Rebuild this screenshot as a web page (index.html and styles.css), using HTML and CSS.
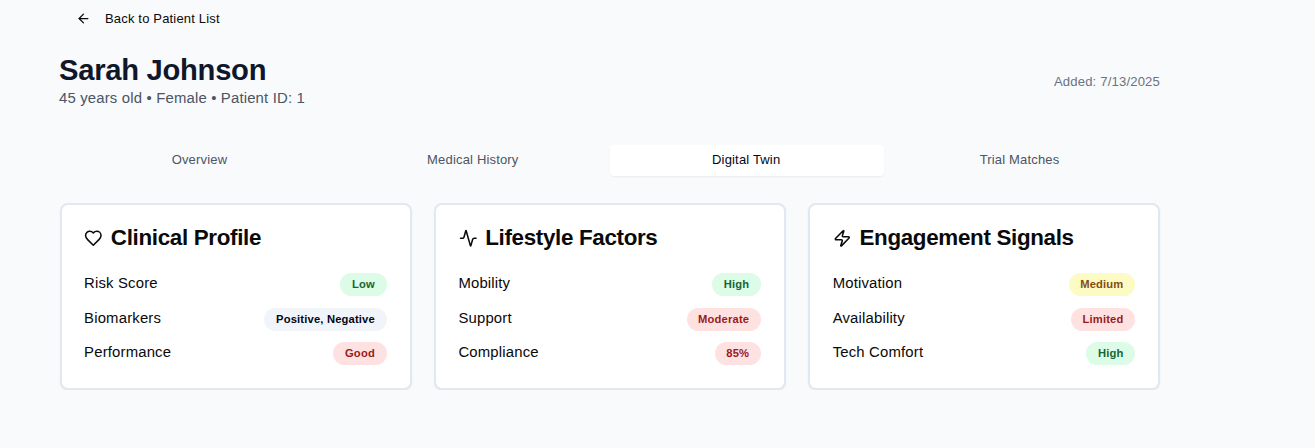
FILE: index.html
```html
<!DOCTYPE html>
<html lang="en">
<head>
<meta charset="utf-8">
<title>Sarah Johnson</title>
<link rel="stylesheet" href="styles.css">
</head>
<body>
<main class="page">
  <a class="back">
    <svg class="icon back-icon" viewBox="0 0 24 24"><path d="m12 19-7-7 7-7"/><path d="M19 12H5"/></svg>
    <span>Back to Patient List</span>
  </a>
  <header class="header">
    <div>
      <h1 class="name">Sarah Johnson</h1>
      <p class="meta">45 years old • Female • Patient ID: 1</p>
    </div>
    <div class="added">Added: 7/13/2025</div>
  </header>
  <nav class="tabs">
    <div class="tab">Overview</div>
    <div class="tab">Medical History</div>
    <div class="tab tab-active">Digital Twin</div>
    <div class="tab">Trial Matches</div>
  </nav>
  <div class="cards">
    <section class="card">
      <h2 class="card-title">
        <svg class="icon" viewBox="0 0 24 24"><path d="M19 14c1.49-1.46 3-3.21 3-5.5A5.5 5.5 0 0 0 16.5 3c-1.76 0-3 .5-4.5 2-1.5-1.5-2.74-2-4.5-2A5.5 5.5 0 0 0 2 8.5c0 2.3 1.5 4.05 3 5.5l7 7Z"/></svg>
        <span>Clinical Profile</span>
      </h2>
      <div class="rows">
        <div class="row"><span>Risk Score</span><span class="badge green">Low</span></div>
        <div class="row"><span>Biomarkers</span><span class="badge slate">Positive, Negative</span></div>
        <div class="row"><span>Performance</span><span class="badge red">Good</span></div>
      </div>
    </section>
    <section class="card">
      <h2 class="card-title">
        <svg class="icon" viewBox="0 0 24 24"><path d="M22 12h-2.48a2 2 0 0 0-1.93 1.46l-2.35 8.36a.25.25 0 0 1-.48 0L9.24 2.18a.25.25 0 0 0-.48 0l-2.35 8.36A2 2 0 0 1 4.49 12H2"/></svg>
        <span>Lifestyle Factors</span>
      </h2>
      <div class="rows">
        <div class="row"><span>Mobility</span><span class="badge green">High</span></div>
        <div class="row"><span>Support</span><span class="badge red">Moderate</span></div>
        <div class="row"><span>Compliance</span><span class="badge red">85%</span></div>
      </div>
    </section>
    <section class="card">
      <h2 class="card-title">
        <svg class="icon" viewBox="0 0 24 24"><path d="M4 14a1 1 0 0 1-.78-1.63l9.9-10.2a.5.5 0 0 1 .86.46l-1.92 6.02A1 1 0 0 0 13 10h7a1 1 0 0 1 .78 1.63l-9.9 10.2a.5.5 0 0 1-.86-.46l1.92-6.02A1 1 0 0 0 11 14z"/></svg>
        <span>Engagement Signals</span>
      </h2>
      <div class="rows">
        <div class="row"><span>Motivation</span><span class="badge yellow">Medium</span></div>
        <div class="row"><span>Availability</span><span class="badge red">Limited</span></div>
        <div class="row"><span>Tech Comfort</span><span class="badge green">High</span></div>
      </div>
    </section>
  </div>
</main>
</body>
</html>
```
FILE: styles.css
```css
* { box-sizing: border-box; margin: 0; padding: 0; }
body {
  background: #f9fafc;
  color: #0a0a0a;
  font-family: "Liberation Sans", Arial, sans-serif;
  font-size: 14.9px;
  letter-spacing: .17px;
  overflow: hidden;
}
.page { width: 1101.5px; margin-left: 59.5px; }
.icon {
  width: 18.6px;
  height: 18.6px;
  flex: none;
  fill: none;
  stroke: currentColor;
  stroke-width: 2;
  stroke-linecap: round;
  stroke-linejoin: round;
}
.back {
  display: flex;
  align-items: center;
  gap: 14.5px;
  height: 37px;
  padding-left: 16px;
  font-size: 13px;
}
.back-icon { width: 15px; height: 15px; }
.header {
  display: flex;
  justify-content: space-between;
  align-items: center;
  height: 56px;
  margin-top: 16px;
  margin-left: -.5px;
  padding-right: 1px;
}
.name { font-size: 29.2px; line-height: 34px; letter-spacing: -.28px; color: #0f172a; }
.meta { line-height: 22px; color: #4b5563; }
.added { font-size: 13.1px; color: #6b7280; }
.tabs {
  display: grid;
  grid-template-columns: repeat(4, 1fr);
  margin-top: 36px;
  padding: 0 4px;
}
.tab {
  height: 31px;
  line-height: 30px;
  padding-right: 1.5px;
  text-align: center;
  font-size: 13px;
  color: #4b5563;
  border-radius: 4px;
}
.tab-active { background: #fff; color: #020617; box-shadow: 0 1px 2px rgba(0, 0, 0, .06); }
.cards {
  display: grid;
  grid-template-columns: repeat(3, 352px);
  gap: 22.3px;
  margin-top: 26.5px;
  margin-left: .4px;
}
.card {
  height: 187px;
  padding: 18.5px 23px 0 22.2px;
  background: #fff;
  border: 2px solid #e2e8f0;
  border-radius: 8px;
  box-shadow: 0 1px 2px rgba(0, 0, 0, .06);
}
.card-title {
  display: flex;
  align-items: center;
  gap: 7.8px;
  height: 30px;
  padding-left: .4px;
  font-size: 22.4px;
  letter-spacing: -.33px;
  white-space: nowrap;
}
.card-title .icon { margin-top: 1px; }
.rows { display: grid; gap: 11.5px; margin-top: 20.2px; }
.row { display: flex; justify-content: space-between; height: 23px; line-height: 20px; }
.badge {
  height: 23px;
  padding: 0 12px 0 11.6px;
  border-radius: 12px;
  font-size: 11.2px;
  font-weight: 700;
  line-height: 23px;
}
.green { background: #dcfce7; color: #166534; }
.red { background: #fee2e2; color: #991b1b; }
.yellow { background: #fdfbc4; color: #854d0e; }
.slate { background: #f1f5f9; color: #020617; }
```
